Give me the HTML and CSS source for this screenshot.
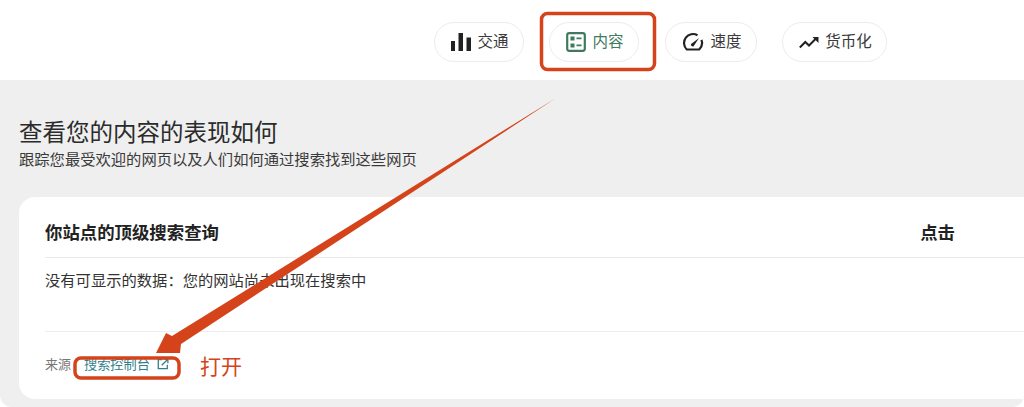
FILE: index.html
```html
<!DOCTYPE html>
<html lang="zh">
<head>
<meta charset="utf-8">
<title>内容</title>
<link rel="stylesheet" href="styles.css">
</head>
<body>
<div class="page">
  <header class="top">
    <nav class="tabs">
      <a class="tab t1"><svg class="ic" viewBox="0 0 20 20"><path d="M0 9h4v10H0zM7.500 1h4.500v18H7.500zM15.500 5.500h4.500V19h-4.500z" fill="#222"/></svg>交通</a>
      <a class="tab t2 active"><svg class="ic" viewBox="0 0 20 20"><rect x="1.200" y="1.200" width="17.600" height="17.600" rx="2" fill="none" stroke="#3f7a5f" stroke-width="2.200"/><path d="M4.500 4.500h4v4h-4zM4.500 11.500h4v4h-4zM10.500 5.500h5v1.800h-5zM10.500 12.500h5v1.800h-5z" fill="#3f7a5f"/></svg>内容</a>
      <a class="tab t3"><svg class="ic" viewBox="0 0 22 20"><path d="M15.500 3.200A9 9 0 0 0 4.800 17.500H17.200A9 9 0 0 0 19.400 7.800" fill="none" stroke="#222" stroke-width="2.200"/><path d="M8.800 12.200a2 2 0 0 0 2.800 2L17 6z" fill="#222"/></svg>速度</a>
      <a class="tab t4"><svg class="ic" viewBox="0 0 20 20"><path d="M0.800 15.500l5.500-5.500 3.700 3.500 7-7" fill="none" stroke="#222" stroke-width="2"/><path d="M13.500 5h6v6z" fill="#222"/></svg>货币化</a>
    </nav>
  </header>
  <main class="body">
    <h1 class="title">查看您的内容的表现如何</h1>
    <p class="sub">跟踪您最受欢迎的网页以及人们如何通过搜索找到这些网页</p>
    <section class="card">
      <div class="card-head"><h2>你站点的顶级搜索查询</h2><h2 class="clicks">点击</h2></div>
      <div class="empty">没有可显示的数据：您的网站尚未出现在搜索中</div>
      <div class="foot"><span class="src">来源</span><a class="link">搜索控制台<svg class="ext" viewBox="0 0 14 14"><path d="M6 2H1.500v10.500H12V8" fill="none" stroke="#2f7f8c" stroke-width="1.500"/><path d="M5.500 8.500L12 2M8 1.300h4.700V6" fill="none" stroke="#2f7f8c" stroke-width="1.500"/></svg></a><span class="open">打开</span></div>
    </section>
  </main>
  <svg class="marks" viewBox="0 0 1024 407">
    <rect x="541.500" y="13.500" width="113" height="56" rx="6" fill="none" stroke="#d5431a" stroke-width="3.500"/>
    <rect x="75" y="358" width="104" height="20" rx="6" fill="none" stroke="#d5431a" stroke-width="3.500"/>
    <path d="M556 98L172 336L166 333L156 353L180 353L181 344Z" fill="#d5431a"/>
  </svg>
</div>
</body>
</html>
```
FILE: styles.css
```css
* { box-sizing: border-box; }
html, body { margin: 0; padding: 0; }
body { width: 1024px; height: 407px; overflow: hidden; background: #fff; font-family: "Noto Sans CJK SC", "Noto Sans", sans-serif; color: #2a2a2a; }
.page { position: relative; width: 1024px; height: 407px; overflow: hidden; border-radius: 12px; }
.top { height: 80px; background: #fff; padding: 22px 0 0 434px; }
.tabs { display: flex; }
.tab { display: flex; align-items: center; justify-content: center; gap: 6px; height: 40px; padding: 0 0 4px 2px; border: 1px solid #ececec; border-radius: 20px; font-size: 15.500px; color: #3a3a3a; background: #fff; }
.t1 { width: 90px; }
.t2 { width: 90px; margin-left: 25px; }
.t3 { width: 92px; margin-left: 26px; }
.t4 { width: 105px; margin-left: 25px; }
.active { color: #3f7a5f; }
.ic { width: 20px; height: 20px; flex: none; margin-top: 4px; }
.t3 .ic { width: 22px; }
.body { height: 327px; background: #efefef; padding: 36px 0 0 19px; }
.title { margin: 0; font-size: 23.500px; line-height: 30px; font-weight: 400; color: #2b2b2b; }
.sub { margin: 0; font-size: 15.300px; line-height: 24px; color: #3a3a3a; }
.card { width: 1040px; height: 202px; margin-top: 27px; background: #fff; border-radius: 16px; padding: 0 0 0 26px; }
.card-head { height: 61px; display: flex; align-items: center; justify-content: space-between; border-bottom: 1px solid #eaeaea; padding-top: 9px; }
.card-head h2 { margin: 0; font-size: 17.400px; font-weight: 700; color: #222; }
.card-head .clicks { margin-right: 104px; }
.empty { height: 74px; padding-top: 9px; font-size: 15.300px; line-height: 24px; color: #333; border-bottom: 1px solid #eeeeee; }
.foot { display: flex; align-items: center; height: 66px; padding-bottom: 3px; }
.src { font-size: 13px; color: #777; width: 39px; }
.link { display: flex; align-items: center; font-size: 13.200px; color: #2f7f8c; }
.ext { width: 12px; height: 12px; margin-left: 7px; }
.open { font-size: 21px; color: #d5431a; margin: 3px 0 0 31px; }
.marks { position: absolute; left: 0; top: 0; width: 1024px; height: 407px; pointer-events: none; }
```
